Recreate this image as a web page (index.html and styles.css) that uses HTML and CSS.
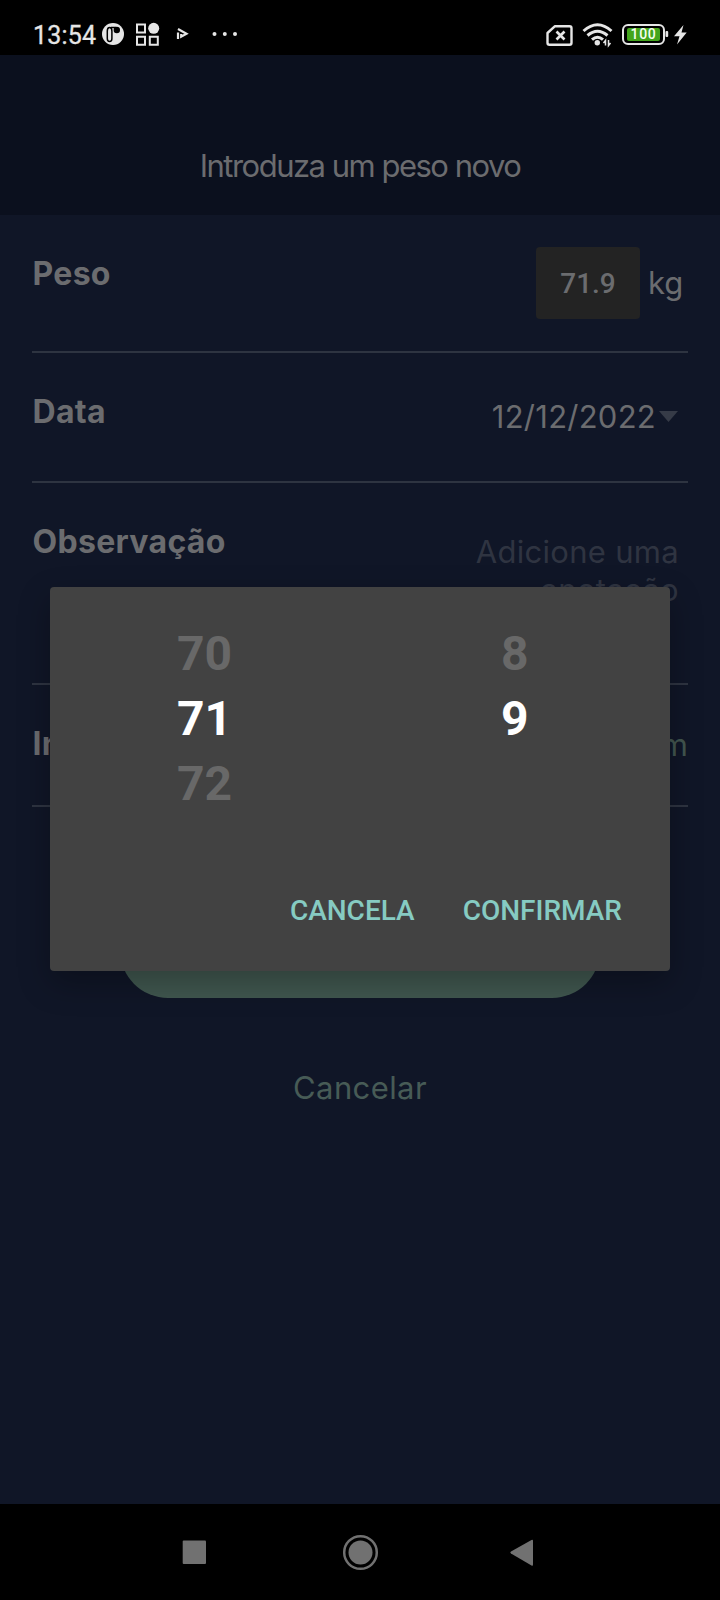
FILE: index.html
```html
<!DOCTYPE html>
<html lang="pt">
<head>
<meta charset="utf-8">
<title>Introduza um peso novo</title>
<link rel="stylesheet" href="styles.css">
</head>
<body>
<div class="screen">
  <div class="status">
    <span class="clock">13:54</span>
    <svg class="status-left" width="140" height="30" viewBox="100 20 140 30">
      <circle cx="113" cy="34" r="11" fill="#e6e6e6"/>
      <path d="M107.300 31q0-3.500 2.300-3.500t2.300 3.500v7.500q0 3-2.300 3t-2.300-3zM111 27.500h5" fill="none" stroke="#000" stroke-width="1.500"/>
      <circle cx="116.800" cy="30" r="3.200" fill="#000"/>
      <g fill="none" stroke="#e6e6e6" stroke-width="2"><path d="M137 24.500h8v8h-8zM137 36.800h8v8h-8zM149.800 36.800h8v8h-8z"/></g>
      <circle cx="153.700" cy="28.300" r="5.500" fill="#e6e6e6"/>
      <path d="M178 29l8.500 4.800-5.300 2.900v-2.700M178 32.500v6.500" fill="none" stroke="#e6e6e6" stroke-width="2.200"/>
      <g fill="#e6e6e6"><circle cx="214.500" cy="34" r="2"/><circle cx="224.800" cy="34" r="2"/><circle cx="235" cy="34" r="2"/></g>
    </svg>
    <div class="status-right">
      <svg width="70" height="30" viewBox="544 20 70 30">
        <path d="M555 26.200h14.500q2 0 2 2v14.500q0 2-2 2h-20q-2 0-2-2V33z" fill="none" stroke="#e6e6e6" stroke-width="2.400" stroke-linejoin="round"/>
        <path d="M556.500 31.500l8 8M564.500 31.500l-8 8" stroke="#e6e6e6" stroke-width="2.600"/>
        <g fill="none" stroke="#e6e6e6" stroke-width="3"><path d="M583.500 31Q597.500 18.500 611.500 31M587.500 35.500q10-8.500 20 0M592 39.700q5.500-5 11 0"/></g>
        <circle cx="597.300" cy="42.800" r="2.700" fill="#e6e6e6"/>
        <path d="M605.500 45.500v-5l-2 2.500M608.500 40v5.500l2-2.500" fill="none" stroke="#e6e6e6" stroke-width="1.500"/>
      </svg>
      <div class="battery"><span>100</span></div>
      <svg width="26" height="30" viewBox="664 20 26 30" fill="#e6e6e6"><rect x="665.500" y="31" width="2.700" height="6" rx="1"/><path d="M683.500 25l-9.500 11.200h5.500L677 44.500l9.700-12h-5.200z"/></svg>
    </div>
  </div>
  <header class="header"><h1 class="title">Introduza um peso novo</h1></header>
  <main class="form">
    <section class="row row-weight">
      <span class="label label-weight">Peso</span>
      <div class="weight"><span class="weight-box">71.9</span><span class="unit">kg</span></div>
    </section>
    <section class="row row-date">
      <span class="label">Data</span>
      <div class="date"><span>12/12/2022</span><i class="caret"></i></div>
    </section>
    <section class="row row-note">
      <span class="label">Observação</span>
      <p class="note">Adicione uma anotação</p>
    </section>
    <section class="row row-image">
      <span class="label">Inserir</span>
      <span class="link">Imagem</span>
    </section>
    <div class="save"></div>
    <div class="cancel">Cancelar</div>
  </main>
  <nav class="nav">
    <svg width="720" height="96" viewBox="0 1504 720 96" fill="#717171">
      <rect x="182.700" y="1540.500" width="23.300" height="23.500" rx="1"/>
      <circle cx="360.500" cy="1552.500" r="12"/>
      <circle cx="360.500" cy="1552.500" r="16.300" fill="none" stroke="#717171" stroke-width="2.500"/>
      <path d="M511 1551.500L531.500 1540q1.500-.7 1.500 1v23.500q0 1.700-1.500 1L511 1553.500q-1.500-1 0-2z"/>
    </svg>
  </nav>
  <div class="dialog">
    <div class="wheels">
      <div class="wheel"><span>70</span><span class="chosen">71</span><span>72</span></div>
      <div class="wheel"><span>8</span><span class="chosen">9</span></div>
    </div>
    <div class="actions"><span>CANCELA</span><span>CONFIRMAR</span></div>
  </div>
</div>
</body>
</html>
```
FILE: styles.css
```css
* { box-sizing: border-box; }
body { margin: 0; background: #101627; }
.screen {
  position: relative;
  display: flex;
  flex-direction: column;
  width: 720px;
  height: 1600px;
  overflow: hidden;
  background: #101627;
  color: #6b6c6f;
  font-family: Inter, sans-serif;
}
.status {
  display: flex;
  height: 55px;
  padding: 20px 30px 0 33px;
  background: #000;
  color: #e6e6e6;
}
.clock {
  width: 67px;
  font: 400 25px/31px Roboto, sans-serif;
  letter-spacing: 0.2px;
  -webkit-text-stroke: 0.3px #e6e6e6;
}
.status-left { flex: none; }
.status-right { display: flex; margin-left: auto; }
.battery {
  width: 43px;
  height: 21px;
  margin: 4px -1px 0 8px;
  padding: 2px 3px;
  border: 2px solid #e6e6e6;
  border-radius: 6px;
}
.battery span {
  display: block;
  height: 13px;
  border-radius: 2px;
  background: #43a51c;
  color: #f4fff0;
  font: 500 14px/13px Roboto, sans-serif;
  letter-spacing: 0.7px;
  text-align: center;
}
.header { height: 160px; padding-top: 92px; background: #0b101e; text-align: center; }
.title { margin: 0; font-size: 31px; font-weight: 400; line-height: 38px; letter-spacing: -1.5px; }
.form { flex: 1; padding: 0 32px; }
.row {
  display: flex;
  justify-content: space-between;
  align-items: flex-start;
  border-bottom: 2px solid #2e3441;
}
.row-weight { height: 138px; padding-top: 32px; }
.row-date { height: 130px; }
.row-note { height: 202px; }
.row-image { height: 122px; }
.label {
  padding-top: 40px;
  padding-left: 0.5px;
  font-size: 32px;
  font-weight: 700;
  line-height: 38px;
  letter-spacing: 0.3px;
}
.label-weight { padding-top: 8px; }
.weight { display: flex; align-items: center; }
.weight-box {
  width: 104px;
  height: 72px;
  border-radius: 4px;
  background: #232323;
  font: 500 28px/74px Roboto, sans-serif;
  text-align: center;
}
.unit { width: 40px; margin-left: 8px; font-size: 31px; line-height: 38px; }
.date { display: flex; padding: 45px 10px 0 0; font-size: 31px; line-height: 38px; letter-spacing: 0.25px; }
.caret {
  width: 19px;
  height: 11px;
  margin: 13px 0 0 3px;
  background: #363b47;
  clip-path: polygon(0 0, 100% 0, 50% 100%);
}
.note {
  width: 230px;
  margin: 50px 9px 0 0;
  color: #2f3441;
  font-size: 31px;
  line-height: 38px;
  letter-spacing: 0.3px;
  text-align: right;
}
.link { padding-top: 41px; color: #42564f; font-size: 31px; line-height: 38px; }
.save {
  width: 480px;
  height: 96px;
  margin: 95px auto 0;
  border-radius: 48px;
  background: #40574f;
}
.cancel {
  margin-top: 71px;
  color: #475b56;
  font-size: 31px;
  line-height: 38px;
  letter-spacing: 0.4px;
  text-align: center;
}
.nav { height: 96px; background: #000; }
.nav svg { display: block; }
.dialog {
  position: absolute;
  top: 587px;
  left: 50px;
  width: 620px;
  height: 384px;
  padding-top: 34px;
  border-radius: 4px;
  background: #424242;
  box-shadow: 0 12px 32px rgba(0, 0, 0, 0.28);
  font-family: Roboto, sans-serif;
}
.wheels { display: grid; grid-template-columns: 1fr 1fr; height: 195px; }
.wheel {
  display: flex;
  flex-direction: column;
  width: 56px;
  margin: 0 auto;
  color: #686868;
  font-size: 48px;
  font-weight: 700;
  line-height: 65px;
}
.wheel:last-child { width: 28px; }
.chosen { color: #fff; }
.actions {
  display: flex;
  justify-content: flex-end;
  gap: 48px;
  padding: 76px 48px 0 0;
  color: #86cbc2;
  font-size: 28px;
  font-weight: 500;
  line-height: 38px;
}
```
